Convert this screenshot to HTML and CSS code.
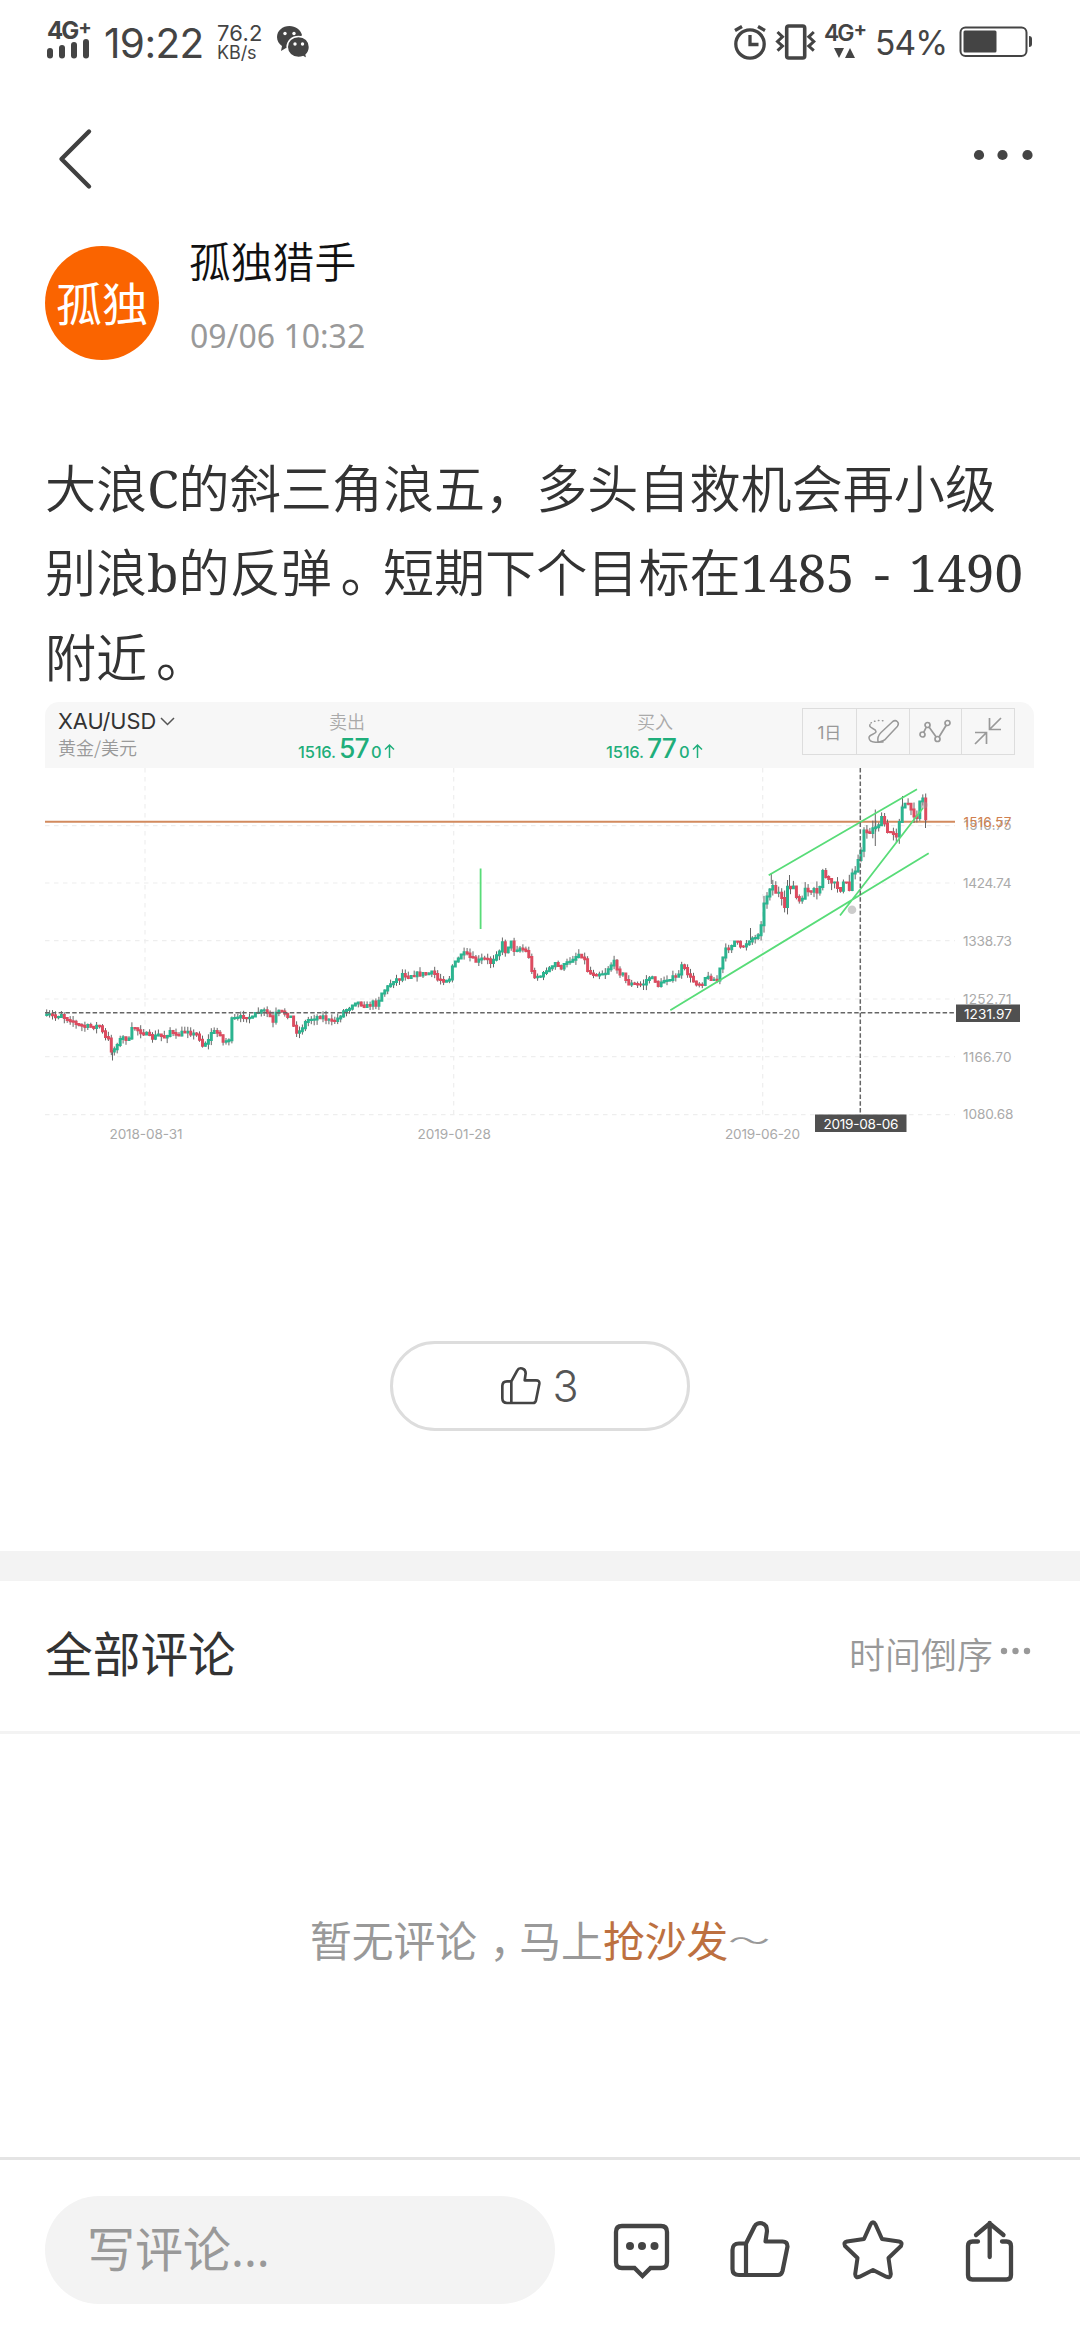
FILE: index.html
```html
<!DOCTYPE html>
<html lang="zh-CN">
<head>
<meta charset="utf-8">
<title>孤独猎手</title>
<link rel="stylesheet" href="styles.css">
</head>
<body>
<div class="statusbar">
  <div class="signal"><span class="net">4G<sup>+</sup></span>
    <svg width="44" height="20" viewBox="0 0 44 20" fill="#444"><rect x="0" y="9" width="6" height="10.500" rx="3"/><rect x="12" y="6" width="6" height="13.500" rx="3"/><rect x="24" y="3" width="6" height="16.500" rx="3"/><rect x="36" y="0" width="6" height="19.500" rx="3"/></svg>
  </div>
  <span class="clock">19:22</span>
  <span class="speed"><b>76.2</b><i>KB/s</i></span>
  <svg class="wechat" width="34" height="34" viewBox="0 0 34 34">
    <path fill="#444" d="M12.500 0C5.500 0 0 4.700 0 11c0 4 2 7 5 9l-1 5 5-3c2 .5 5 .6 6.500.2L25 9C23.500 3.500 18.500 0 12.500 0Z"/>
    <path fill="#444" stroke="#fff" stroke-width="1.600" d="M21.500 10.500C15 10.500 10.200 15 10.200 21s5 10.500 11.300 10.500c1.700 0 3.200-.3 4.500-.8l4 2.300-.8-4.200c2-1.900 3.300-4.700 3.300-7.800 0-6-4.500-10.500-11-10.500Z"/>
    <g fill="#fff"><circle cx="8" cy="7.500" r="1.700"/><circle cx="17" cy="7.500" r="1.700"/><circle cx="18" cy="18" r="1.700"/><circle cx="25.500" cy="18" r="1.700"/></g>
  </svg>
  <div class="right">
    <svg width="32" height="36" viewBox="0 0 32 36" fill="none" stroke="#444" stroke-width="3.300"><circle cx="16" cy="20" r="14.200"/><path d="M16 11v9.500h8.500M1 6.500 8 2.500M31 6.500 24 2.500"/></svg>
    <svg width="40" height="36" viewBox="0 0 40 36" fill="none" stroke="#444" stroke-width="3.600"><rect x="10.700" y="2" width="18" height="32" rx="2"/><path stroke-width="3" d="M1.500 8l5 4.800-5 4.700 5 4.600-5 4.500M37.800 8l-5 4.800 5 4.700-5 4.600 5 4.500"/></svg>
    <div class="data"><span class="net2">4G<sup>+</sup></span><svg width="22" height="10" viewBox="0 0 22 10" fill="#444"><path d="M0 0h10L5 10ZM11 10h10L16 0Z"/></svg></div>
    <span class="pct">54%</span>
    <svg class="battery" width="74" height="32" viewBox="0 0 74 32"><rect x="1.500" y="1.500" width="66" height="28.500" rx="5" fill="none" stroke="#444" stroke-width="2"/><rect x="4.500" y="4.500" width="33" height="22" rx="1.500" fill="#444"/><path d="M70 10q3 0 3 3v5q0 3-3 3Z" fill="#444"/></svg>
  </div>
</div>
<nav class="nav">
  <svg width="36" height="62" viewBox="0 0 36 62" fill="none" stroke="#404040" stroke-width="4.400" stroke-linecap="round" stroke-linejoin="round"><path d="M31 3.500 3.500 31 31 58.500"/></svg>
  <svg width="60" height="12" viewBox="0 0 60 12" fill="#444"><circle cx="6" cy="6" r="5.100"/><circle cx="29.500" cy="6" r="5.100"/><circle cx="54.500" cy="6" r="5.100"/></svg>
</nav>
<header class="author">
  <div class="avatar">孤独</div>
  <div class="who"><div class="name">孤独猎手</div><div class="time">09/06 10:32</div></div>
</header>
<article class="post">
  <p>大浪<span class="lat">C</span>的斜三角浪五，多头自救机会再小级<br>别浪<span class="lat">b</span>的反弹<span class="stop">。</span>短期下个目标在<span class="lat num">1485 - 1490</span><br>附近<span class="stop">。</span></p>
  <figure class="chart">
    <div class="quote">
      <div class="pair"><div class="sym">XAU/USD<svg width="15" height="9" viewBox="0 0 15 9" fill="none" stroke="#555" stroke-width="1.500"><path d="M1 1l6.500 6.500L14 1"/></svg></div><div class="sub">黄金/美元</div></div>
      <div class="side sell"><div class="lbl">卖出</div><div class="price"><span class="int">1516.</span><span class="big">57</span><span class="last">0</span><svg width="11" height="14" viewBox="0 0 11 14" fill="none" stroke="#1fae7b" stroke-width="1.500"><path d="M5.500 14V1M1 5.500 5.500 1 10 5.500"/></svg></div></div>
      <div class="side buy"><div class="lbl">买入</div><div class="price"><span class="int">1516.</span><span class="big">77</span><span class="last">0</span><svg width="11" height="14" viewBox="0 0 11 14" fill="none" stroke="#1fae7b" stroke-width="1.500"><path d="M5.500 14V1M1 5.500 5.500 1 10 5.500"/></svg></div></div>
      <div class="tools">
        <div><span>1日</span></div>
        <div><svg width="32" height="25" viewBox="0 0 32 25" fill="none" stroke="#999" stroke-width="1.500" stroke-linecap="round"><path stroke-dasharray=".5 3.500" d="M4 4Q9 .5 18 2"/><path d="M3 5.500C1 9 9 9.500 9 12.500S1.500 15 2 19s5 4.500 9 4M11 23.200c-.8-4 .2-7 3-9.700L25.500 2.700c3.500-2.700 7.500.8 5 4.500L19.500 19c-2 2.600-5 3.700-8.500 4.200ZM16 23l-4.500.3"/></svg></div>
        <div><svg width="32" height="24" viewBox="0 0 32 24" fill="none" stroke="#999" stroke-width="1.700"><circle cx="3.500" cy="15.500" r="2.500"/><circle cx="8.500" cy="6" r="2.500"/><circle cx="18.500" cy="20" r="2.500"/><circle cx="28.500" cy="4" r="2.500"/><path d="M4.700 13.300 7.300 8.200M10 8l7 9.800M20 18 27.200 6.200"/></svg></div>
        <div><svg width="28" height="28" viewBox="0 0 28 28" fill="none" stroke="#999" stroke-width="1.700"><path d="M27 1 15.500 12.500M15.500 1v11.500H27M1 27 12.500 15.500M1 15.500h11.500V27"/></svg></div>
      </div>
    </div>
    <svg class="plot" width="989" height="380" viewBox="45 768 989 380">
      <g stroke="#eee" stroke-width="1.200" stroke-dasharray="4.500 4.500"><path d="M145 768v347M453.700 768v347M762.700 768v347M45 825.700h910M45 883h910M45 940.700h910M45 999h910M45 1056.700h910M45 1114.700h910"/></g>
      <path d="M45 821.700h910" stroke="#d28a5e" stroke-width="2"/>
      <g id="candles"></g>
      <g stroke="#58dc78" stroke-width="1.800" fill="none"><path d="M480.600 868.500V929M768.700 875.300 917 789.300M670.300 1010.300 928.700 853.300M840 915.500 923 808"/></g>
      <circle cx="852" cy="909.700" r="4.300" fill="#ccc"/><circle cx="924" cy="805" r="3.500" fill="#999" opacity=".5"/>
      <path d="M45 1012.700h911M860.300 768v347" stroke="#666" stroke-width="1.500" stroke-dasharray="4.500 2.300"/>
      <g class="axis">
        <text x="963.500" y="829.500" textLength="48">1510.75</text>
        <text class="now" x="963.500" y="827" textLength="48">1516.57</text>
        <text x="963" y="888" textLength="48.500">1424.74</text>
        <text x="963" y="945.700" textLength="49">1338.73</text>
        <text x="963" y="1003.700" textLength="48.500">1252.71</text>
        <text x="963" y="1061.500" textLength="48.500">1166.70</text>
        <text x="963" y="1119" textLength="50.500">1080.68</text>
        <text x="109.500" y="1138.500" textLength="73">2018-08-31</text>
        <text x="417.500" y="1138.500" textLength="73.500">2019-01-28</text>
        <text x="725" y="1138.500" textLength="75">2019-06-20</text>
      </g>
      <g fill="#505050"><path d="M956 1004.500h64v17.500h-64ZM815 1114.500h91.500V1132H815Z"/></g>
      <g class="axis tag"><text x="964" y="1018.700" textLength="48">1231.97</text><text x="823.500" y="1128.700" textLength="75">2019-08-06</text></g>
    </svg>
  </figure>
</article>
<div class="like"><button>
  <svg width="38" height="38" viewBox="0 0 57 57" fill="none" stroke="#444" stroke-width="4" stroke-linejoin="round"><path d="M15.500 21.500H9q-7 0-7 7V47q0 7 7 7h39q3.500 0 4.500-4l5-25q.5-5-5-5H35.500L37 9.500C37 1 27 0 24.500 5L15.500 21.500V54"/></svg><span>3</span></button></div>
<div class="gap"></div>
<div class="comments-head"><h2>全部评论</h2><div class="sort">时间倒序<svg width="30" height="8" viewBox="0 0 30 8" fill="#999"><circle cx="4" cy="4" r="3.200"/><circle cx="15.500" cy="4" r="3.200"/><circle cx="27" cy="4" r="3.200"/></svg></div></div>
<div class="empty">暂无评论<span class="comma">，</span>马上<em>抢沙发</em><span class="wave">～</span></div>
<footer class="bar">
  <div class="input">写评论<span>...</span></div>
  <svg width="58" height="60" viewBox="0 0 58 60" fill="none" stroke="#444" stroke-width="4.300" stroke-linejoin="miter"><path d="M9 5h39q6 0 6 6v30q0 6-6 6H37.500l-8 8-8-8H9q-6 0-6-6V11q0-6 6-6Z"/><g fill="#444" stroke="none"><circle cx="17" cy="25" r="4"/><circle cx="29" cy="25" r="4"/><circle cx="41.500" cy="25" r="4"/></g></svg>
  <svg width="58" height="60" viewBox="0 0 58 60" fill="none" stroke="#444" stroke-width="4.200" stroke-linejoin="round"><path d="M16 23.500H9q-6.500 0-6.500 6.500v19q0 6 6.500 6h39q3.500 0 4.500-4l5-24.500q0-5-5-5H35.500L37 11C37 2 27 1 24.500 6.500L16 23.500V55"/></svg>
  <svg width="60" height="60" viewBox="0 0 60 60" fill="none" stroke="#444" stroke-width="4" stroke-linejoin="round"><path d="M27.500 4.500q2.500-4.500 5 0l6.500 14.500 17 2.500q4 1 2 4.500L45.500 38l2.300 16q-.3 4.500-4.500 2.700L30 50 16.700 56.700q-4.200 1.800-4.500-2.700L14.500 38 2 26q-2-3.500 2-4.500l17-2.500Z"/></svg>
  <svg width="50" height="62" viewBox="0 0 50 62" fill="none" stroke="#444" stroke-width="4.300" stroke-linecap="round" stroke-linejoin="round"><path d="M13 21.500H7.500q-4.500 0-4.500 4.500v29q0 4.500 4.500 4.500h34q4.500 0 4.500-4.500V26q0-4.500-4.500-4.500H37M24.700 37V3M11 15 24.700 3.500 38.500 15"/></svg>
</footer>
<script src="chart.js"></script>
</body>
</html>
```
FILE: chart.js
```js
// Closing-price trace as x,y pairs, in thirds of a pixel from (30, 690).
const trace = `48,980 62,975 78,982 95,972 105,985 125,990 140,1005 165,1010 190,1010 212,1008 222,1040 238,1050 243,1080 250,1085 258,1065 270,1050 285,1040 295,1060 303,1020 315,1013 330,1025 345,1030 365,1045 385,1035 405,1042 420,1022 437,1040 455,1030 475,1020 485,1032 505,1036 517,1066 535,1052 545,1025 570,1030 580,1058 597,1048 605,990 625,985 645,978 668,985 680,968 705,963 718,975 730,1000 740,965 765,970 783,982 793,1015 805,1030 815,1015 830,992 850,985 875,978 890,988 905,997 925,985 940,965 960,952 973,935 990,940 1010,950 1030,938 1043,945 1050,915 1070,895 1090,872 1112,865 1120,845 1130,862 1145,855 1165,852 1190,852 1212,848 1222,868 1240,870 1258,868 1266,830 1282,812 1295,790 1310,795 1325,805 1340,815 1355,808 1370,808 1385,820 1395,795 1410,780 1415,750 1422,785 1432,780 1440,748 1452,780 1470,775 1485,780 1497,800 1505,845 1515,858 1530,860 1545,850 1550,838 1565,835 1578,818 1588,835 1605,825 1625,808 1648,792 1660,800 1668,820 1675,850 1700,852 1725,850 1740,828 1755,815 1765,845 1780,855 1792,880 1820,885 1840,883 1855,862 1875,870 1887,890 1900,872 1920,865 1942,862 1955,830 1970,845 1985,870 2005,883 2017,880 2025,862 2045,865 2060,875 2072,830 2083,785 2100,770 2118,750 2130,775 2145,765 2163,745 2180,745 2192,710 2200,650 2210,620 2225,580 2235,605 2250,612 2258,640 2265,660 2272,590 2290,590 2300,625 2315,640 2325,592 2340,612 2355,600 2365,618 2378,540 2390,570 2410,578 2430,600 2445,572 2460,605 2468,540 2480,540 2485,500 2495,480 2502,425 2520,425 2535,410 2545,405 2558,380 2572,430 2585,425 2602,438 2610,375 2618,350 2635,340 2645,370 2662,380 2670,330 2681,325 2688,395`
  .split(' ').map(p => p.split(',').map(Number));
let seed = 7;
const rnd = () => (seed = seed * 16807 % 2147483647) / 2147483647;
function at(x) {
  let i = 1;
  while (i < trace.length - 1 && trace[i][0] < x) i++;
  const [x0, y0] = trace[i - 1], [x1, y1] = trace[i];
  return y0 + (y1 - y0) * Math.min(1, (x - x0) / (x1 - x0));
}
const paths = { wick: '', up: '', down: '' };
let open = 975;
for (let x = 50; x <= 2690; x += 8.82) {
  const close = at(x) + (rnd() - .5) * 11;
  const px = 30 + x / 3, y = v => (690 + v / 3).toFixed(1);
  const top = Math.min(open, close), bottom = Math.max(open, close);
  const reach = x > 2200 ? 24 : 17;
  paths.wick += `M${px.toFixed(1)} ${y(top - rnd() * reach)}V${y(bottom + rnd() * reach)}`;
  paths[close < open ? 'up' : 'down'] += `M${px.toFixed(1)} ${y(top - 3)}V${y(bottom + 3)}`;
  open = close;
}
paths.wick += 'M112.500 1050V1060.500M875.300 809.500V846M771.300 873V884M902.500 796V812M789.500 875V888M750.500 928V940M925.500 816V828';
document.getElementById('candles').innerHTML =
  `<path d="${paths.wick}" stroke="#666" stroke-width="1"/>` +
  `<path d="${paths.up}" stroke="#2cb490" stroke-width="3"/>` +
  `<path d="${paths.down}" stroke="#dc4c60" stroke-width="3"/>`;
```
FILE: styles.css
```css
* { box-sizing: border-box; }
body { margin: 0; width: 1080px; height: 2340px; background: #fff; color: #333; overflow: hidden;
  font-family: "Noto Sans CJK SC", "Noto Sans", sans-serif; display: flex; flex-direction: column; }
svg { display: block; flex: none; overflow: visible; }
b, i, em { font-weight: inherit; font-style: normal; }

.statusbar { height: 100px; padding: 23px 48px 0 47px; display: flex; align-items: flex-start; flex: none; color: #444; font-family: Inter, sans-serif; }
.signal { width: 57px; flex: none; }
.net, .net2 { display: flex; font-weight: 700; font-size: 24px; line-height: 16px; height: 16px; letter-spacing: -2px; white-space: nowrap; }
.net sup, .net2 sup { font-size: 20px; line-height: 8px; margin-left: 1px; }
.clock { font-size: 40.500px; line-height: 41px; width: 113px; letter-spacing: -.6px; white-space: nowrap; }
.speed { width: 60px; display: flex; flex-direction: column; white-space: nowrap; }
.speed b { font-size: 22px; line-height: 20px; letter-spacing: .2px; }
.speed i { font-size: 18px; line-height: 20px; letter-spacing: -.1px; }
.wechat { margin-top: 3px; }
.right { display: flex; margin-left: auto; margin-top: 1px; }
.right > svg:nth-child(2) { margin-left: 10px; }
.data { width: 44px; margin: 0 0 0 8px; display: flex; flex-direction: column; gap: 7px; padding-top: 1px; }
.net2 { font-size: 23px; font-weight: 600; }
.net2 sup { font-weight: 700; }
.data svg { margin-left: 10px; }
.pct { font-size: 33.500px; line-height: 39px; width: 74px; margin-left: 7px; letter-spacing: -.9px; }
.battery { margin: 2px -1px 0 10px; }

.nav { height: 140px; padding: 28px 47px 0 58px; display: flex; justify-content: space-between; flex: none; }
.nav svg:last-child { margin-top: 21px; }

.author { height: 204px; padding: 0 45px; display: flex; gap: 31px; flex: none; }
.avatar { width: 114px; height: 114px; margin-top: 6px; border-radius: 50%; background: #fa6400; color: #fff; font-size: 46px; line-height: 111px; text-align: center; white-space: nowrap; }
.name { font-size: 41.800px; line-height: 44px; color: #111; font-weight: 350; margin: -2px 0 0 -1px; }
.time { font: 32px/40px "Noto Sans", sans-serif; color: #999; margin-top: 34px; }

.post { padding: 0 45px; height: 897px; flex: none; }
.post p { margin: 0; font-size: 51.100px; line-height: 84.300px; height: 258px; white-space: nowrap; font-weight: 350; color: #333; }
.lat { font-family: "Noto Serif", "DejaVu Serif Condensed", "DejaVu Serif", serif; font-size: 51px; line-height: 1; font-weight: 400; }
.num { word-spacing: 6px; }
.stop { padding-left: .17em; letter-spacing: -.17em; }
.chart { margin: 0; width: 989px; }
.quote { height: 66px; background: #f7f7f7; border-radius: 14px 14px 0 0; display: flex; padding: 6px 19px 0 13px; font-family: Inter, "Noto Sans CJK SC", sans-serif; }
.pair { width: 204px; white-space: nowrap; }
.sym { font-size: 21.800px; line-height: 26px; color: #333; display: flex; align-items: center; gap: 4px; }
.sub, .lbl { font-family: "Noto Sans CJK SC", sans-serif; font-size: 18px; line-height: 26px; color: #aaa; font-weight: 350; }
.sub { color: #999; }
.side { width: 308px; white-space: nowrap; padding-left: 36px; }
.sell .lbl, .buy .lbl { padding-left: 31px; }
.lbl { height: 24px; line-height: 24px; margin-top: 1px; }
.price { display: flex; align-items: baseline; color: #1fae7b; font-size: 16.500px; line-height: 30px; height: 30px; font-weight: 500; }
.price .big { font-size: 26.500px; width: 32px; letter-spacing: -.8px; }
.price .int { width: 41px; letter-spacing: -.2px; }
.price .last { width: 13px; }
.tools { margin-left: auto; display: grid; grid-template-columns: repeat(4, 1fr); width: 213px; flex: none; height: 46.500px; border: 1.500px solid #ddd; color: #999; font-size: 17px; }
.tools div { display: flex; align-items: center; justify-content: center; }
.tools div + div { border-left: 1.500px solid #ddd; }
.side.buy { width: 180px; }
.axis { font-family: Inter, sans-serif; font-size: 13.600px; fill: #aaa; font-weight: 400; }
.axis .now { fill: #d0804e; }
.axis.tag { fill: #fff; }

.like { height: 210px; display: flex; justify-content: center; flex: none; }
.like button { width: 300px; height: 90px; border: 3px solid #ddd; border-radius: 45px; background: #fff; padding: 0; display: flex; align-items: center; justify-content: center; gap: 13px; font: 300 43px Inter, sans-serif; color: #555; }
.gap { height: 30px; background: #f3f3f3; flex: none; }
.comments-head { height: 153px; border-bottom: 3px solid #f3f3f3; padding: 0 50px 0 45px; display: flex; align-items: center; justify-content: space-between; flex: none; }
h2 { margin: 0 0 9px; font-size: 47.700px; line-height: 60px; font-weight: 400; color: #333; }
.sort { display: flex; align-items: center; gap: 7px; font-size: 36px; line-height: 46px; color: #999; font-weight: 350; margin-bottom: 7px; }
.sort svg { margin-top: -4px; }
.empty { height: 423px; padding-top: 175px; text-align: center; font-size: 41.800px; line-height: 60px; color: #999; flex: none; white-space: nowrap; }
.empty em { color: #bd7040; }
.comma { padding-left: .3em; letter-spacing: -.3em; margin-right: .01em; }
.wave { display: inline-block; transform: scaleY(.55); }
.bar { height: 183px; border-top: 3px solid #e4e4e4; padding: 36px 55px 0 45px; display: flex; flex: none; }
.input { width: 510px; height: 108px; border-radius: 54px; background: #f3f3f3; color: #999; font-size: 48px; line-height: 100px; padding-left: 42px; margin-right: 58px; }
.input span { font-family: "Noto Sans", sans-serif; }
.bar svg { margin-top: 24px; }
.bar svg:nth-of-type(1) { margin-right: 59px; margin-top: 25px; }
.bar svg:nth-of-type(2) { margin-right: 55px; }
.bar svg:nth-of-type(3) { margin-right: 62px; }
```
